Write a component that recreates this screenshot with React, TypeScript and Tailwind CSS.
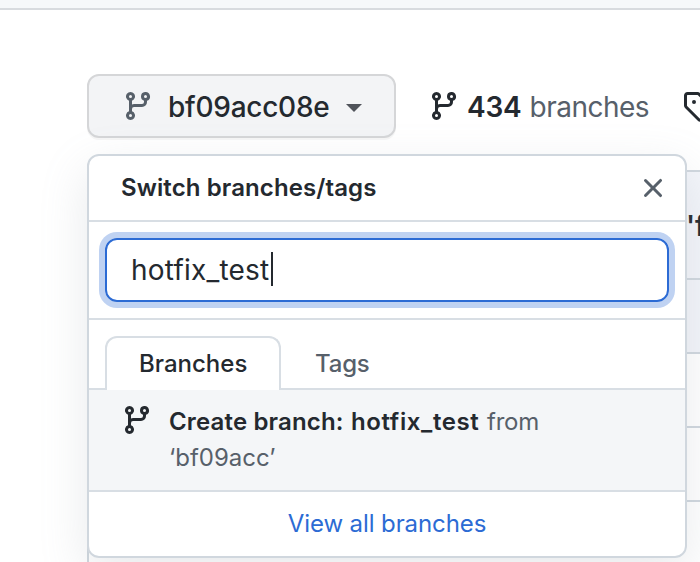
import type { ReactNode } from "react";

function Icon({ d, className }: { d: string; className: string }) {
  return (
    <svg viewBox="0 0 16 16" className={`block size-8 shrink-0 fill-current ${className}`} aria-hidden="true">
      <path fillRule="evenodd" d={d} />
    </svg>
  );
}

const BRANCH =
  "M11.75 2.5a.75.75 0 100 1.5.75.75 0 000-1.5zm-2.25.75a2.25 2.25 0 113 2.122V6A2.5 2.5 0 0110 8.5H6a1 1 0 00-1 1v1.128a2.251 2.251 0 11-1.5 0V5.372a2.25 2.25 0 111.5 0v1.836A2.492 2.492 0 016 7h4a1 1 0 001-1v-.628A2.25 2.25 0 019.5 3.25zM4.25 12a.75.75 0 100 1.5.75.75 0 000-1.5zM3.5 3.25a.75.75 0 111.5 0 .75.75 0 01-1.5 0z";
const TAG =
  "M2.5 7.775V2.75a.25.25 0 01.25-.25h5.025a.25.25 0 01.177.073l6.25 6.25a.25.25 0 010 .354l-5.025 5.025a.25.25 0 01-.354 0l-6.25-6.25a.25.25 0 01-.073-.177zm-1.5 0V2.75C1 1.784 1.784 1 2.75 1h5.025c.464 0 .91.184 1.238.513l6.25 6.25a1.75 1.75 0 010 2.474l-5.026 5.026a1.75 1.75 0 01-2.474 0l-6.25-6.25A1.75 1.75 0 011 7.775zM6 5a1 1 0 100 2 1 1 0 000-2z";
const CLOSE =
  "M3.72 3.72a.75.75 0 011.06 0L8 6.94l3.22-3.22a.75.75 0 111.06 1.06L9.06 8l3.22 3.22a.75.75 0 11-1.06 1.06L8 9.06l-3.22 3.22a.75.75 0 01-1.06-1.06L6.94 8 3.72 4.78a.75.75 0 010-1.06z";

function Toolbar() {
  return (
    <div className="flex h-16 w-[700px] pl-[87px]">
      <button className="flex h-16 w-[309px] shrink-0 items-center rounded-xl border-2 border-[#d5d6d8] bg-[#f3f4f6] pl-[33px] text-[28px] font-medium shadow-[0_2px_0_rgba(27,31,36,0.04)]">
        <Icon d={BRANCH} className="text-[#57606a]" />
        <span className="ml-[14px] w-[164px] pt-px text-left tracking-[-0.25px] whitespace-nowrap">bf09acc08e</span>
        <span className="mt-1 ml-[14px] border-x-8 border-t-8 border-x-transparent border-t-[#50535a]" />
      </button>
      <div className="ml-8 flex shrink-0 items-center text-[28px]">
        <Icon d={BRANCH} className="text-[#24292f]" />
        <span className="ml-[7px] w-[62.5px] pt-px font-semibold tracking-[-0.2px] whitespace-nowrap">434</span>
        <span className="w-[121.5px] pt-px tracking-[-0.5px] text-[#57606a] whitespace-nowrap">branches</span>
      </div>
      <div className="ml-[31px] flex items-center">
        <Icon d={TAG} className="text-[#24292f]" />
      </div>
    </div>
  );
}

function FileTable() {
  return (
    <div className="mt-8 ml-[87px] h-[392px] w-[700px] border-t-2 border-l-2 border-[#d0d7de]">
      <div className="flex h-[108px] items-center border-b-2 border-[#d0d7de] bg-[#f3f5fa] pt-0.5 pl-[597px] text-[28px] font-semibold">'f</div>
      <div className="h-[74px] border-b-2 border-[#d0d7de] bg-[#f3f5fa]" />
      <div className="h-[74px] border-b-2 border-[#d0d7de]" />
      <div className="h-[74px] border-b-2 border-[#d0d7de]" />
    </div>
  );
}

function Tab({ active, children }: { active?: boolean; children: ReactNode }) {
  return active ? (
    <div className="z-10 -mb-0.5 flex h-[54px] w-[176px] items-center rounded-t-xl border-2 border-b-0 border-[#d8dee4] bg-white pl-8 text-[24px] font-medium">
      {children}
    </div>
  ) : (
    <div className="flex h-[52px] items-center pt-1 pl-[34px] text-[24px] font-medium tracking-[-0.2px] text-[#57606a]">{children}</div>
  );
}

function SelectMenu() {
  return (
    <div className="absolute top-[154px] left-[87px] flex h-[404px] w-[600px] flex-col overflow-hidden rounded-xl border-2 border-[#d0d7de] bg-white">
      <div className="flex h-[66px] shrink-0 items-center justify-between border-b-2 border-[#d8dee4] pr-4 pl-8">
        <span className="text-[24px] font-semibold tracking-[0.1px] whitespace-nowrap">Switch branches/tags</span>
        <Icon d={CLOSE} className="text-[#57606a]" />
      </div>
      <div className="h-[98px] shrink-0 border-b-2 border-[#d8dee4] p-4">
        <div className="flex h-16 items-center rounded-xl border-2 border-[#2c6bd4] pl-6 text-[28px] shadow-[0_0_0_6px_#bfd2f2]">
          <span className="w-[140px] tracking-[0.2px] whitespace-nowrap">hotfix_test</span>
          <span className="-mt-0.5 h-[34px] w-0.5 bg-[#24292f]" />
        </div>
      </div>
      <div className="flex h-[70px] shrink-0 items-end border-b-2 border-[#d8dee4] pl-4">
        <Tab active>Branches</Tab>
        <Tab>Tags</Tab>
      </div>
      <div className="flex h-[102px] shrink-0 border-b-2 border-[#d8dee4] bg-[#f4f6f8] pt-[14px] pl-8">
        <Icon d={BRANCH} className="text-[#24292f]" />
        <div className="ml-4 text-[24px] leading-9 text-[#57606a]">
          <div className="flex whitespace-nowrap">
            <span className="w-[182px] font-semibold tracking-[0.15px] text-[#24292f]">Create branch:</span>
            <span className="w-[136px] font-semibold tracking-[0.6px] text-[#24292f]">hotfix_test</span>
            <span className="tracking-[-0.2px]">from</span>
          </div>
          <div>‘bf09acc’</div>
        </div>
      </div>
      <div className="flex flex-1 items-center justify-center text-[24px] text-[#2c6bd4]">
        <span className="tracking-[-0.1px] whitespace-nowrap">View all branches</span>
      </div>
    </div>
  );
}

export default function App() {
  return (
    <div className="relative h-[562px] w-[700px] overflow-hidden bg-white font-['Inter','Liberation_Sans',sans-serif] text-[#24292f]">
      <div className="mb-16 h-[10px] border-b-2 border-[#d8dbdf] bg-[#f6f8fa]" />
      <Toolbar />
      <FileTable />
      <div className="pointer-events-none absolute top-[154px] left-[87px] h-[404px] w-[600px] rounded-xl shadow-[0_16px_48px_rgba(140,149,159,0.2)]" />
      <SelectMenu />
    </div>
  );
}
